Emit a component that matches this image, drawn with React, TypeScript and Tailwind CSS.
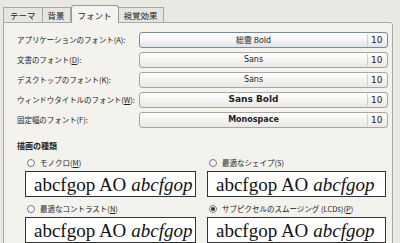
import React from "react";

const rows = [
  { label: "アプリケーションのフォント", key: "A", font: "総雲 Bold", focus: true, cls: "font-normal" },
  { label: "文書のフォント", key: "D", font: "Sans", cls: "font-normal", u: true },
  { label: "デスクトップのフォント", key: "K", font: "Sans", cls: "font-normal" },
  { label: "ウィンドウタイトルのフォント", key: "W", font: "Sans Bold", cls: "font-bold text-[9px]", u: true },
  { label: "固定幅のフォント", key: "F", font: "Monospace", cls: "font-semibold" },
];

const jp = { fontFamily: '"Noto Sans CJK JP", sans-serif' };
const sans = { fontFamily: '"DejaVu Sans", sans-serif' };

function Preview() {
  return (
    <div
      className="h-[26px] border border-[#333] bg-white flex items-center pl-[8px] overflow-hidden whitespace-nowrap text-[19px] leading-none text-[#111]"
      style={{ fontFamily: '"Liberation Serif", serif' }}
    >
      abcfgop AO <span className="italic ml-[5px]">abcfgop</span>
    </div>
  );
}

function Radio({ label, checked }: { label: React.ReactNode; checked?: boolean }) {
  return (
    <div className="flex items-center h-[13px] pl-[2px] gap-[5px] text-[7.5px] text-[#222]" style={jp}>
      <span className="w-[8px] h-[8px] rounded-full border border-[#777] bg-white flex items-center justify-center">
        {checked && <span className="w-[4px] h-[4px] rounded-full bg-[#333]" />}
      </span>
      <span>{label}</span>
    </div>
  );
}

export default function App() {
  return (
    <div className="w-[400px] h-[243px] bg-[#e9e8e2] overflow-hidden relative">
      <div className="flex items-end h-[22px] pl-[3px]" style={jp}>
        <div className="h-[15px] px-[6px] border border-b-0 border-[#a9a8a2] bg-[#e6e5df] text-[8.5px] leading-[15px] text-[#222]">テーマ</div>
        <div className="h-[15px] px-[5px] border border-b-0 border-l-0 border-[#a9a8a2] bg-[#e6e5df] text-[8.5px] leading-[15px] text-[#222]">背景</div>
        <div className="h-[18px] px-[6px] border border-b-0 border-[#8a9ab0] rounded-t-[3px] bg-[#f4f3ee] text-[8.5px] leading-[18px] text-[#222] relative top-[1px] z-10">フォント</div>
        <div className="h-[15px] px-[5px] border border-b-0 border-l-0 border-[#a9a8a2] bg-[#e6e5df] text-[8.5px] leading-[15px] text-[#222]">視覚効果</div>
      </div>
      <div className="ml-[3px] w-[390px] h-[230px] border border-[#a9a8a2] rounded-tr-[3px] bg-[#f3f2ed] pt-[9px] pl-[13px] pr-[4px]">
        <div className="flex flex-col gap-[4px]">
          {rows.map((r) => (
            <div key={r.key} className="flex items-center h-[16px]">
              <div className="w-[122px] text-[7.5px] tracking-[-0.05px] text-[#222] whitespace-nowrap" style={jp}>
                {r.label}(<span className={r.u ? "underline" : ""}>{r.key}</span>):
              </div>
              <div
                className={
                  "flex-1 h-[16px] rounded-[3px] border flex items-center " +
                  (r.focus
                    ? "border-[#7a8aa0] bg-gradient-to-b from-[#ffffff] via-[#f3f5f8] to-[#dde3ec]"
                    : "border-[#a6a6a0] bg-gradient-to-b from-[#ffffff] to-[#e9e8e4]")
                }
              >
                <div className={"flex-1 text-center text-[8px] text-[#222] " + r.cls} style={r.key === "A" ? jp : sans}>
                  {r.font}
                </div>
                <div className="w-[20px] h-[12px] border-l border-[#d0d0cc] text-[9px] leading-[12px] text-[#222] pl-[3px]" style={sans}>
                  10
                </div>
              </div>
            </div>
          ))}
        </div>
        <div className="mt-[12px] text-[8px] font-bold text-[#222]" style={jp}>
          描画の種類
        </div>
        <div className="grid grid-cols-[171px_179px] gap-x-[11px] pl-[8px] mt-[4px]">
          <div className="flex flex-col gap-[2px]">
            <Radio label={<>モノクロ(<span className="underline">M</span>)</>} />
            <Preview />
          </div>
          <div className="flex flex-col gap-[2px]">
            <Radio label="最適なシェイプ(S)" />
            <Preview />
          </div>
          <div className="flex flex-col gap-[2px] mt-[5px]">
            <Radio label={<>最適なコントラスト(<span className="underline">N</span>)</>} />
            <Preview />
          </div>
          <div className="flex flex-col gap-[2px] mt-[5px]">
            <Radio checked label={<>サブピクセルのスムージング (LCDs)(<span className="underline">P</span>)</>} />
            <Preview />
          </div>
        </div>
      </div>
    </div>
  );
}
